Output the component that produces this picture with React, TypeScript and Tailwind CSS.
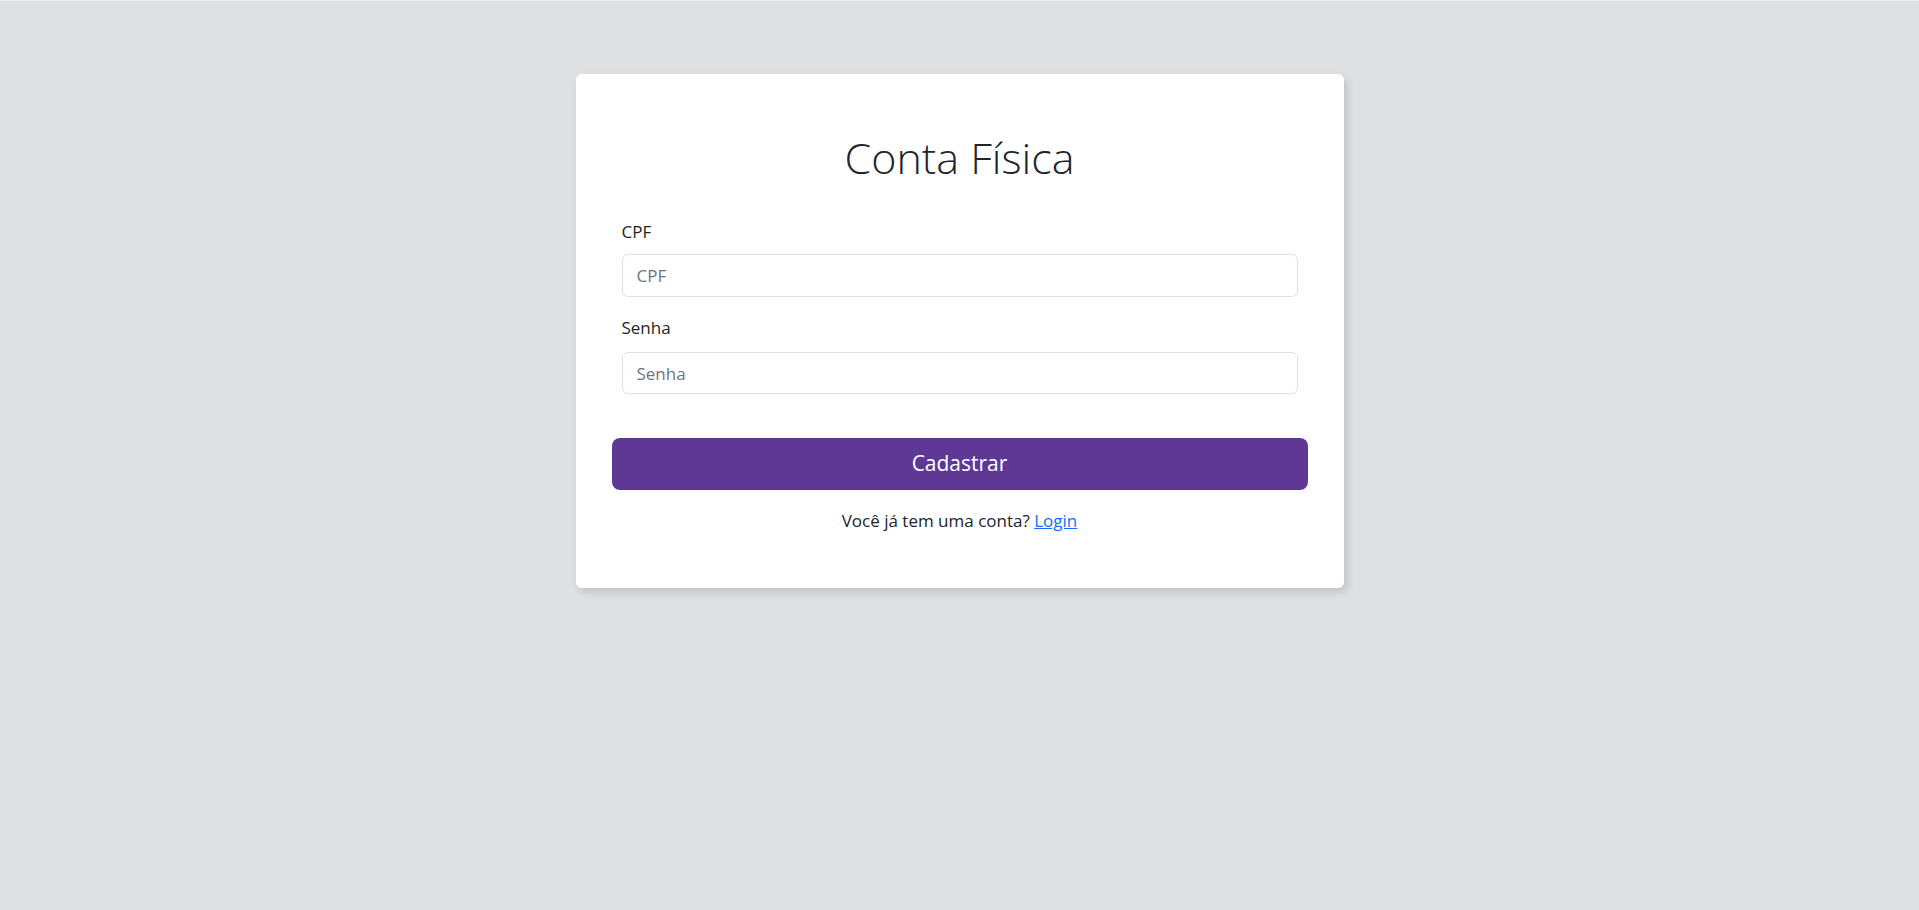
export default function App() {
  return (
    <div className="min-h-[910px] bg-[#dfe0e2] border-t border-[#ebebec] pt-[73px] font-['Open_Sans',sans-serif] text-[#212529]">
      <div className="w-[768px] mx-auto bg-white rounded-md shadow-[3px_4px_8px_rgba(0,0,0,0.14)] px-9 pt-[58px] pb-[54px]">
        <h1 className="text-center text-[43px] leading-[52px] font-light text-[#212529]">Conta Física</h1>

        <form className="mt-9" onSubmit={(e) => e.preventDefault()}>
          <div className="px-[10px]">
            <label className="block text-[17px] leading-6 mb-[10px]">CPF</label>
            <input
              className="w-full h-[43px] border border-[#dee2e6] rounded-md px-[14px] text-[17px] outline-none placeholder:text-[#6c757d]"
              placeholder="CPF"
              type="text"
            />
            <label className="block text-[17px] leading-6 mt-[19px] mb-[12px]">Senha</label>
            <input
              className="w-full h-[42px] border border-[#dee2e6] rounded-md px-[14px] text-[17px] outline-none placeholder:text-[#6c757d]"
              placeholder="Senha"
              type="password"
            />
          </div>

          <button className="mt-[44px] w-full h-[52px] rounded-lg bg-[#5e3894] text-white text-[21px]">
            Cadastrar
          </button>
        </form>

        <p className="mt-[17px] text-center text-[17px] leading-[27px]">
          Você já tem uma conta?{" "}
          <a href="#" className="text-[#0d6efd] underline">
            Login
          </a>
        </p>
      </div>
    </div>
  );
}
